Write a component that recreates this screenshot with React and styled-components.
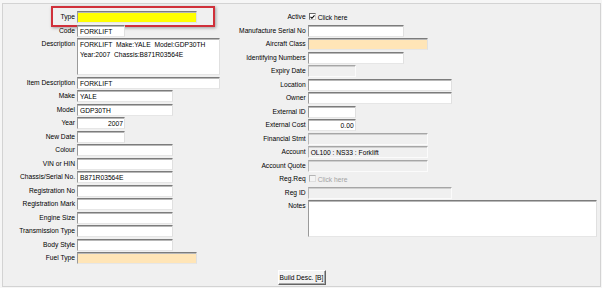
import React from "react";
import styled, { createGlobalStyle, css } from "styled-components";

const Global = createGlobalStyle`
  html, body { margin: 0; padding: 0; background: #f6f6f6; }
  body { font-family: "Liberation Sans", Arial, sans-serif; font-size: 6.7px; color: #000; }
  * { box-sizing: border-box; }
`;

const Frame = styled.div`
  margin: 3px 0 0 2px;
  width: 599px;
  height: 284px;
  border: 1px solid #d3d3d3;
  background: #f0f0f0;
  display: flex;
  flex-direction: column;
  padding-top: 7px;
  padding-bottom: 1px;
`;

const Columns = styled.div`
  display: flex;
  align-items: flex-start;
`;

const Panel = styled.div`
  width: ${(p) => p.$width}px;
  display: grid;
  grid-template-columns: ${(p) => p.$labelWidth}px auto;
  column-gap: 2px;
  row-gap: 1.5px;
  justify-items: start;
`;

const Label = styled.div`
  justify-self: end;
  align-self: ${(p) => (p.$top ? "start" : "center")};
  margin-top: ${(p) => (p.$top ? "1px" : "-1px")};
  white-space: nowrap;
  line-height: 9px;
  position: relative;
`;

const sunken = css`
  border-top: 1px solid #7c7c7c;
  border-left: 1px solid #9a9a9a;
  border-right: 1px solid #e0e0e0;
  border-bottom: 1px solid #e6e6e6;
  box-shadow: inset 0 1px 0 #b8b8b8;
`;

const Field = styled.div`
  position: relative;
  width: ${(p) => p.$w}px;
  height: ${(p) => p.$h || 12}px;
  ${sunken}
  background: ${(p) =>
    p.$tone === "yellow"
      ? "#ffff00"
      : p.$tone === "peach"
      ? "#ffe5b7"
      : p.$tone === "off"
      ? "#f0f0f0"
      : "#ffffff"};
  ${(p) =>
    p.$tone === "off" &&
    css`
      border-top-color: #a6a6a6;
      border-left-color: #b8b8b8;
      border-right-color: #fbfbfb;
      border-bottom-color: #fbfbfb;
      box-shadow: inset 0 1px 0 #cfcfcf;
    `}
  padding: 1px ${(p) => (p.$right ? "1px" : "0")} 0 ${(p) => (p.$right ? "0" : "2px")};
  text-align: ${(p) => (p.$right ? "right" : "left")};
  line-height: ${(p) => (p.$h ? "10px" : "9px")};
  white-space: pre-wrap;
  overflow: hidden;
`;

const CheckCell = styled.div`
  display: flex;
  align-items: center;
  gap: 2px;
  height: 12px;
  padding-left: 1px;
  color: ${(p) => (p.$off ? "#a3a3a3" : "#000")};
`;

const Box = styled.span`
  width: 7px;
  height: 7px;
  margin-top: -1px;
  display: inline-flex;
  align-items: center;
  justify-content: center;
  background: ${(p) => (p.$off ? "#f4f4f4" : "#fff")};
  border-top: 1px solid ${(p) => (p.$off ? "#b4b4b4" : "#6a6a6a")};
  border-left: 1px solid ${(p) => (p.$off ? "#b4b4b4" : "#6a6a6a")};
  border-right: 1px solid ${(p) => (p.$off ? "#dedede" : "#cfcfcf")};
  border-bottom: 1px solid ${(p) => (p.$off ? "#dedede" : "#cfcfcf")};
`;

const Highlight = styled.div`
  position: absolute;
  right: -140px;
  top: -6px;
  width: 164px;
  height: 21px;
  border: 2px solid #d0303a;
  box-shadow: 1px 1px 3px rgba(0, 0, 0, 0.35);
  pointer-events: none;
`;

const Footer = styled.div`
  margin-top: auto;
  display: flex;
  justify-content: center;
`;

const Button = styled.button`
  width: 48px;
  height: 15px;
  padding: 0;
  font-family: "Liberation Sans", Arial, sans-serif;
  font-size: 6.7px;
  color: #000;
  background: #f3f3f3;
  border-top: 1px solid #ffffff;
  border-left: 1px solid #ffffff;
  border-right: 1px solid #646464;
  border-bottom: 1px solid #646464;
  box-shadow: inset -1px -1px 0 #a8a8a8;
`;

const Check = () => (
  <svg width="6" height="6" viewBox="0 0 6 6">
    <path d="M0.6 2.8 L2.3 4.5 L5.4 1" stroke="#000" strokeWidth="1.3" fill="none" />
  </svg>
);

const leftRows = [
  { label: "Code", w: 48, text: "FORKLIFT" },
  { label: "Description", w: 143, h: 37, text: "FORKLIFT  Make:YALE  Model:GDP30TH\nYear:2007  Chassis:B871R03564E" },
  { label: "Item Description", w: 143, text: "FORKLIFT" },
  { label: "Make", w: 96, text: "YALE" },
  { label: "Model", w: 96, text: "GDP30TH" },
  { label: "Year", w: 48, text: "2007", right: true },
  { label: "New Date", w: 48 },
  { label: "Colour", w: 96 },
  { label: "VIN or HIN", w: 96 },
  { label: "Chassis/Serial No.", w: 96, text: "B871R03564E" },
  { label: "Registration No", w: 96 },
  { label: "Registration Mark", w: 96 },
  { label: "Engine Size", w: 96 },
  { label: "Transmission Type", w: 96 },
  { label: "Body Style", w: 96 },
  { label: "Fuel Type", w: 120, tone: "peach" },
];

const rightRows = [
  { label: "Manufacture Serial No", w: 96 },
  { label: "Aircraft Class", w: 120, tone: "peach" },
  { label: "Identifying Numbers", w: 96 },
  { label: "Expiry Date", w: 48, tone: "off" },
  { label: "Location", w: 144 },
  { label: "Owner", w: 144 },
  { label: "External ID", w: 48 },
  { label: "External Cost", w: 48, text: "0.00", right: true },
  { label: "Financial Stmt", w: 120, tone: "off" },
  { label: "Account", w: 120, tone: "off", text: "OL100 : NS33 : Forklift" },
  { label: "Account Quote", w: 120, tone: "off" },
  { check: true, label: "Reg.Req", off: true },
  { label: "Reg ID", w: 144, tone: "off" },
  { label: "Notes", w: 289, h: 37 },
];

const Row = ({ r }) => (
  <>
    <Label $top={!!r.h}>{r.label}</Label>
    {r.check ? (
      <CheckCell $off={r.off}>
        <Box $off={r.off}>{r.off ? null : <Check />}</Box>
        <span>Click here</span>
      </CheckCell>
    ) : (
      <Field $w={r.w} $h={r.h} $tone={r.tone} $right={r.right}>
        {r.text}
      </Field>
    )}
  </>
);

export default function App() {
  return (
    <>
      <Global />
      <Frame>
        <Columns>
          <Panel $width={222} $labelWidth={72}>
            <Label>
              Type
              <Highlight />
            </Label>
            <Field $w={120} $tone="yellow" />
            {leftRows.map((r) => (
              <Row key={r.label} r={r} />
            ))}
          </Panel>
          <Panel $width={376} $labelWidth={81}>
            <Row r={{ check: true, label: "Active" }} />
            {rightRows.map((r) => (
              <Row key={r.label} r={r} />
            ))}
          </Panel>
        </Columns>
        <Footer>
          <Button>Build Desc. [B]</Button>
        </Footer>
      </Frame>
    </>
  );
}
